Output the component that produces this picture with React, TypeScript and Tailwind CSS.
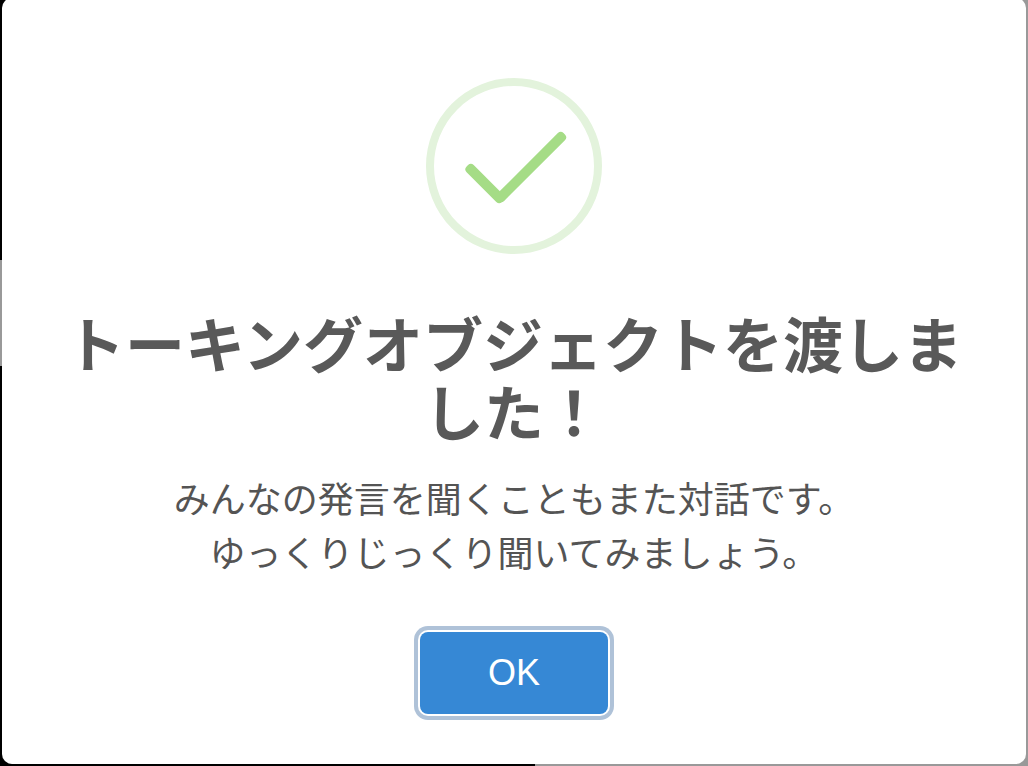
import { useState } from 'react'

interface AlertDialogProps {
  title: string
  /** 本文（1行ごとに改行） */
  lines: string[]
  confirmText?: string
  onConfirm: () => void
}

function SuccessIcon() {
  return (
    <svg className="size-44" viewBox="0 0 176 176" fill="none" aria-hidden="true">
      <circle cx="88" cy="88" r="84" stroke="#e3f3dc" strokeWidth="8" />
      <rect x="34" y="100.5" width="50" height="10" rx="4" fill="#a5dc86" transform="rotate(45 59 105.5)" />
      <rect x="58" y="84" width="94" height="10" rx="4" fill="#a5dc86" transform="rotate(-45 105 89)" />
    </svg>
  )
}

/** 完了通知ダイアログ */
function AlertDialog({ title, lines, confirmText = 'OK', onConfirm }: AlertDialogProps) {
  return (
    <div
      role="dialog"
      aria-modal="true"
      aria-labelledby="alert-title"
      aria-describedby="alert-text"
      className="relative mx-0.5 -mt-0.5 flex flex-col items-center rounded-[10px] bg-white px-10 pt-20 pb-[50px] text-center text-[#545454]"
    >
      <SuccessIcon />
      <h2 id="alert-title" className="mt-15 px-2 text-[60px] leading-[68px] font-bold text-[#595959]">
        {title}
      </h2>
      <p id="alert-text" className="mt-6 text-[36px] leading-[54px]">
        {lines.map((line) => (
          <span key={line} className="block">
            {line}
          </span>
        ))}
      </p>
      <button
        type="button"
        onClick={onConfirm}
        className="mt-[50px] rounded-lg bg-[#3688d5] px-17 py-5 text-[36px] leading-[42px] text-white shadow-[0_0_0_2px_#fff,0_0_0_6px_#afc2d8] outline-none"
      >
        {confirmText}
      </button>
    </div>
  )
}

export default function App() {
  const [open, setOpen] = useState(true)

  return (
    <main className="relative min-h-screen overflow-hidden bg-black font-['Liberation_Sans','Noto_Sans_CJK_JP',sans-serif]">
      {/* 背景 */}
      <div className="absolute top-[260px] left-0 h-[106px] w-1/2 bg-[#999]" />
      <div className="absolute top-0 right-0 bottom-0 left-[52%] bg-[#999]" />
      {open && (
        <AlertDialog
          title="トーキングオブジェクトを渡しました！"
          lines={['みんなの発言を聞くこともまた対話です。', 'ゆっくりじっくり聞いてみましょう。']}
          onConfirm={() => setOpen(false)}
        />
      )}
    </main>
  )
}
